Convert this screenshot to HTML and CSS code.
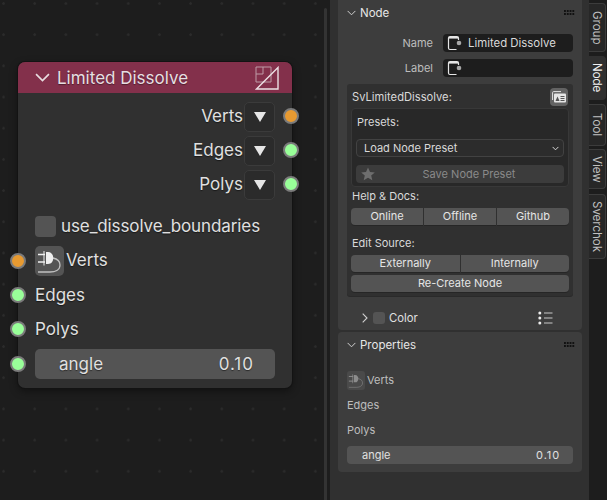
FILE: index.html
```html
<!DOCTYPE html>
<html lang="en">
  <head>
    <meta charset="UTF-8" />
    <title>Limited Dissolve</title>
    <link rel="stylesheet" href="styles.css">
  </head>
  <body>
    <svg class="defs" width="0" height="0">
      <symbol id="chev-down" viewBox="0 0 10 6"><path d="M0.7 0.7 L5 5 L9.3 0.7" fill="none" stroke="currentColor" stroke-width="1.1"/></symbol>
      <symbol id="node-ic" viewBox="0 0 15 16"><path d="M9.5 14.5 H3 Q1.5 14.5 1.5 13 V3 Q1.5 1.5 3 1.5 H10 Q11.5 1.5 11.5 3 V5" fill="none" stroke="#e6e6e6" stroke-width="1.2"/><path d="M2 2 H11 V3.6 H2 Z" fill="#e6e6e6"/><circle cx="12" cy="8" r="2.3" fill="#a8a8a8"/></symbol>
      <symbol id="plug" viewBox="0 0 29 30"><path d="M3 8.5 H10 M3 16 H10" stroke="currentColor" stroke-width="1.6"/><path d="M9 5 V19.500" stroke="currentColor" stroke-width="1"/><path d="M11 6 H13 C20 6 20 18 13 18 H11 Z" fill="currentColor"/><path d="M18 12 C23 13 25 15.500 25 19 C25 24 20 26 15 26 H3" fill="none" stroke="currentColor" stroke-opacity="0.7" stroke-width="1.3"/></symbol>
    </svg>

    <div class="app">
      <div class="canvas">
        <div class="scrollbar"></div>

        <div class="node">
          <div class="node-head">
            <svg class="node-chev"><use href="#chev-down"/></svg>
            <span class="node-title">Limited Dissolve</span>
            <svg class="node-icon" viewBox="0 0 24 24">
              <path d="M1 1 H16 V16 H1 Z M8 1 V8 H1" fill="none" stroke="#bd9aa6" stroke-width="1"/>
              <path d="M1.500 23 L23 1.500 V23 Z" fill="none" stroke="#ecdfe3" stroke-width="1.400"/>
            </svg>
          </div>

          <div class="node-row out"><span>Verts</span><div class="tri-btn"><i></i></div><b class="socket orange right"></b></div>
          <div class="node-row out"><span>Edges</span><div class="tri-btn"><i></i></div><b class="socket green right"></b></div>
          <div class="node-row out"><span>Polys</span><div class="tri-btn"><i></i></div><b class="socket green right"></b></div>

          <div class="node-row check-row"><div class="check"></div><span>use_dissolve_boundaries</span></div>
          <div class="node-row plug-row">
            <b class="socket orange left"></b>
            <div class="plug-btn"><svg><use href="#plug"/></svg></div><span>Verts</span>
          </div>
          <div class="node-row in first"><b class="socket green left"></b><span>Edges</span></div>
          <div class="node-row in"><b class="socket green left"></b><span>Polys</span></div>
          <div class="node-row field-row">
            <b class="socket green left"></b>
            <div class="node-field"><span>angle</span><span class="value">0.10</span></div>
          </div>
        </div>
      </div>

      <div class="sidebar">
        <section class="panel panel-node">
          <div class="panel-head">
            <svg class="chev"><use href="#chev-down"/></svg><span>Node</span><div class="grip"></div>
          </div>
          <div class="prop-row first">
            <label>Name</label>
            <div class="text-field"><svg><use href="#node-ic"/></svg><span>Limited Dissolve</span></div>
          </div>
          <div class="prop-row">
            <label>Label</label>
            <div class="text-field"><svg><use href="#node-ic"/></svg></div>
          </div>

          <div class="box">
            <div class="box-head">
              <span>SvLimitedDissolve:</span>
              <div class="icon-btn">
                <svg viewBox="0 0 14 12" width="14" height="12">
                  <path d="M0.600 9 V1.600 Q0.600 0.600 1.600 0.600 H9" fill="none" stroke="#e6e6e6" stroke-width="1"/>
                  <rect x="2" y="2.500" width="12" height="9" rx="1" fill="#e6e6e6"/>
                  <path d="M3.500 10 L5.500 5.500 L7.500 10 Z" fill="#555"/>
                  <path d="M8.500 5.500 H12.500 M8.500 7.500 H12.500 M8.500 9.500 H12.500" stroke="#555" stroke-width="1"/>
                </svg>
              </div>
            </div>

            <div class="inner-box">
              <div class="line">Presets:</div>
              <div class="select">
                <span>Load Node Preset</span>
                <svg viewBox="0 0 8 5" width="7" height="5"><path d="M0.700 0.700 L4 4 L7.300 0.700" fill="none" stroke="#ddd" stroke-width="1.100"/></svg>
              </div>
              <div class="save-btn">
                <svg viewBox="0 0 14 14" width="14" height="14"><path d="M7 0.500 L9 5 L13.800 5.400 L10.200 8.500 L11.300 13.300 L7 10.800 L2.700 13.300 L3.800 8.500 L0.200 5.400 L5 5 Z" fill="#6e6e6e"/></svg>
                <span>Save Node Preset</span>
              </div>
            </div>

            <div class="line label-help">Help &amp; Docs:</div>
            <div class="btn-group">
              <div class="btn">Online</div>
              <div class="btn">Offline</div>
              <div class="btn">Github</div>
            </div>

            <div class="line label-edit">Edit Source:</div>
            <div class="btn-group">
              <div class="btn">Externally</div>
              <div class="btn">Internally</div>
            </div>
            <div class="btn-group">
              <div class="btn">Re-Create Node</div>
            </div>
          </div>

          <div class="color-row">
            <svg class="chev-right" viewBox="0 0 6 10" width="6" height="10"><path d="M0.700 0.700 L5 5 L0.700 9.300" fill="none" stroke="#d0d0d0" stroke-width="1.100"/></svg>
            <div class="small-check"></div>
            <span>Color</span>
            <svg class="list-ic" viewBox="0 0 15 14" width="15" height="14">
              <circle cx="1.800" cy="2" r="1.500" fill="#eee"/><circle cx="1.800" cy="7" r="1.500" fill="#eee"/><circle cx="1.800" cy="12" r="1.500" fill="#eee"/>
              <path d="M6 2 H14.500 M6 7 H14.500 M6 12 H14.500" stroke="#9a9a9a" stroke-width="1.400"/>
            </svg>
          </div>
        </section>

        <section class="panel panel-props">
          <div class="panel-head">
            <svg class="chev"><use href="#chev-down"/></svg><span>Properties</span><div class="grip"></div>
          </div>
          <div class="sock-row verts">
            <div class="plug-small"><svg><use href="#plug"/></svg></div><span>Verts</span>
          </div>
          <div class="sock-row">Edges</div>
          <div class="sock-row">Polys</div>
          <div class="num-field"><span>angle</span><span class="value">0.10</span></div>
        </section>
      </div>

      <div class="tabs">
        <div class="tab tab-group">Group</div>
        <div class="tab tab-node active">Node</div>
        <div class="tab tab-tool">Tool</div>
        <div class="tab tab-view">View</div>
        <div class="tab tab-sverchok">Sverchok</div>
      </div>
    </div>
  </body>
</html>
```

FILE: styles.css
```css
html,
body {
  margin: 0;
  padding: 0;
  background: #1d1d1d;
}
body {
  font-family: "Inter", "Liberation Sans", sans-serif;
  overflow: hidden;
}
.defs {
  position: absolute;
}
.app {
  display: flex;
  width: 607px;
  height: 500px;
  overflow: hidden;
}

/* node editor */
.canvas {
  position: relative;
  width: 330px;
  flex: none;
  background-color: #1d1d1d;
  background-image: radial-gradient(circle at 3.5px 3.5px, #2b2b2b 1px, transparent 1.6px);
  background-size: 31.2px 31.2px;
}
.scrollbar {
  position: absolute;
  left: 324px;
  top: 8px;
  bottom: 0;
  width: 3px;
  background: #333;
  border-radius: 2px 2px 0 0;
}
.node {
  position: absolute;
  left: 18px;
  top: 62px;
  width: 274px;
  height: 326px;
  background: #303030;
  border-radius: 7px;
  box-shadow: 0 0 0 1px #131313, 0 3px 8px rgba(0, 0, 0, 0.45);
  color: #e0e0e0;
  font-size: 17px;
}
.node-head {
  display: flex;
  align-items: center;
  height: 31px;
  background: #83304b;
  border-radius: 7px 7px 0 0;
  padding-left: 17px;
  margin-bottom: 6px;
}
.node-chev {
  width: 15px;
  height: 9px;
  color: #e8dde0;
  margin-right: 7px;
}
.node-title {
  color: #e6dfe1;
  text-shadow: 0 1px 1px rgba(0, 0, 0, 0.4);
}
.node-icon {
  width: 24px;
  height: 24px;
  margin: 1px 13px 0 auto;
}
.node-row {
  position: relative;
  display: flex;
  align-items: center;
  height: 34px;
  padding: 0 17px;
  text-shadow: 0 1px 1px rgba(0, 0, 0, 0.5);
}
.node-row.out {
  justify-content: flex-end;
}
.tri-btn {
  display: flex;
  align-items: center;
  justify-content: center;
  width: 31px;
  height: 30px;
  margin-left: 1px;
  margin-top: 1px;
  box-sizing: border-box;
  border: 1px solid #3b3b3b;
  border-radius: 5px;
  background: #2b2b2b;
}
.tri-btn i {
  width: 0;
  height: 0;
  border-left: 6.5px solid transparent;
  border-right: 6.5px solid transparent;
  border-top: 10px solid #e6e6e6;
}
.socket {
  position: absolute;
  top: 50%;
  width: 12px;
  height: 12px;
  margin-top: -8px;
  border: 2px solid #7b7b7b;
  border-radius: 50%;
}
.socket.left {
  left: -8px;
}
.socket.right {
  right: -7px;
}
.socket.orange {
  background: #e79a31;
}
.socket.green {
  background: #99ff99;
}
.check-row {
  height: 22px;
  margin-top: 14px;
  letter-spacing: -0.1px;
}
.check {
  width: 21px;
  height: 21px;
  margin-right: 5px;
  background: #545454;
  border-radius: 4px;
}
.plug-row {
  height: 30px;
  margin-top: 9px;
}
.plug-row span {
  padding-bottom: 2px;
}
.plug-btn {
  width: 29px;
  height: 30px;
  margin-right: 2px;
  background: #545454;
  border-radius: 5px;
  color: #eee;
}
.plug-btn svg {
  display: block;
  width: 29px;
  height: 30px;
}
.node-row.first {
  margin-top: 2px;
}
.field-row {
  height: 30px;
  margin-top: 3px;
}
.node-field {
  display: flex;
  justify-content: space-between;
  align-items: center;
  flex: 1;
  height: 30px;
  padding: 0 21px 0 24px;
  background: #545454;
  border-radius: 5px;
}
.node-field .value {
  letter-spacing: 1px;
}

/* sidebar */
.sidebar {
  width: 259px;
  flex: none;
  box-sizing: border-box;
  height: 500px;
  padding: 0 7px 0 8px;
  background: #303030;
  font-size: 11px;
  color: #d9d9d9;
}
.panel {
  background: #3d3d3d;
  border-radius: 4px;
  padding: 0 9px;
}
.panel-node {
  padding-bottom: 3px;
  border-radius: 0 0 4px 4px;
}
.panel-props {
  margin-top: 2px;
  padding-bottom: 8px;
}
.panel-head {
  display: flex;
  align-items: center;
  height: 26px;
  color: #e6e6e6;
  font-size: 11.5px;
}
.chev {
  width: 9px;
  height: 6px;
  margin-right: 4px;
  color: #d0d0d0;
}
.grip {
  width: 11px;
  height: 6px;
  margin: 0 -2px 0 auto;
  background-image: radial-gradient(circle at 1px 1px, #111 0.9px, transparent 1px);
  background-size: 2.8px 3px;
}
.prop-row {
  display: flex;
  align-items: center;
  margin-top: 7px;
}
.prop-row.first {
  margin-top: 8px;
}
.prop-row label {
  width: 86px;
  flex: none;
  text-align: right;
  color: #bdbdbd;
}
.text-field {
  display: flex;
  align-items: center;
  flex: 1;
  height: 18px;
  margin-left: 10px;
  padding-left: 4px;
  background: #1d1d1d;
  border-radius: 4px;
  color: #d9d9d9;
  font-size: 11.4px;
}
.text-field svg {
  width: 15px;
  height: 16px;
  margin-right: 6px;
}
.box {
  margin-top: 7px;
  height: 212px;
  box-sizing: border-box;
  padding: 4px;
  background: #303030;
  border-radius: 3px;
  box-shadow: 0 1px 0 #2a2a2a;
}
.box-head {
  display: flex;
  align-items: center;
  justify-content: space-between;
  height: 18px;
  padding: 0 1px;
  font-size: 11.2px;
}
.icon-btn {
  display: flex;
  align-items: center;
  justify-content: center;
  width: 18px;
  height: 18px;
  background: #636363;
  border-radius: 4px;
}
.inner-box {
  margin-top: 2px;
  height: 79px;
  box-sizing: border-box;
  padding: 4px 4px 0;
  background: #282828;
  border: 1px solid #383838;
  border-radius: 4px;
}
.line {
  height: 18px;
  line-height: 18px;
  padding-left: 1px;
}
.select {
  display: flex;
  align-items: center;
  justify-content: space-between;
  height: 18px;
  box-sizing: border-box;
  margin-top: 8px;
  padding: 0 4px 0 7px;
  background: #2c2c2c;
  border: 1px solid #424242;
  border-radius: 4px;
}
.save-btn {
  position: relative;
  box-sizing: border-box;
  height: 18px;
  line-height: 18px;
  margin-top: 8px;
  padding-left: 18px;
  text-align: center;
  background: #3c3c3c;
  border-radius: 4px;
  color: #8a8a8a;
}
.save-btn svg {
  position: absolute;
  left: 5px;
  top: 2px;
}
.label-help {
  margin-top: 0;
}
.label-edit {
  margin-top: 9px;
}
.btn-group {
  display: flex;
  gap: 1px;
  margin-top: 3px;
  height: 17px;
}
.btn {
  flex: 1;
  line-height: 17px;
  text-align: center;
  background: #545454;
  color: #e6e6e6;
  box-shadow: 0 1px 0 #262626;
}
.btn:first-child {
  border-radius: 4px 0 0 4px;
}
.btn:last-child {
  border-radius: 0 4px 4px 0;
}
.btn:only-child {
  border-radius: 4px;
}
.color-row {
  display: flex;
  align-items: center;
  height: 18px;
  margin-top: 13px;
  padding-left: 15px;
  color: #e0e0e0;
  font-size: 11.3px;
}
.small-check {
  width: 12px;
  height: 12px;
  margin: 0 4px 0 5px;
  background: #545454;
  border-radius: 3px;
}
.list-ic {
  margin-left: auto;
  margin-right: 20px;
}
.sock-row {
  display: flex;
  align-items: center;
  height: 18px;
  margin-top: 7px;
  color: #bdbdbd;
}
.sock-row.verts {
  height: 19px;
  margin-top: 13px;
}
.sock-row.verts span {
  padding-bottom: 2px;
}
.sock-row.verts + .sock-row {
  margin-top: 6px;
}
.plug-small {
  width: 18px;
  height: 19px;
  margin-right: 2px;
  background: #4a4a4a;
  border-radius: 3px;
  color: #8c8c8c;
}
.plug-small svg {
  display: block;
  width: 18px;
  height: 19px;
}
.num-field {
  display: flex;
  justify-content: space-between;
  align-items: center;
  height: 18px;
  margin-top: 7px;
  padding: 0 13px 0 15px;
  background: #545454;
  border-radius: 4px;
  color: #e0e0e0;
}
.num-field .value {
  letter-spacing: 0.9px;
}

/* region tabs */
.tabs {
  flex: 1;
  padding-top: 3px;
  background: #1d1d1d;
  font-size: 11.5px;
  color: #c0c0c0;
}
.tab {
  box-sizing: border-box;
  width: 17px;
  display: flex;
  align-items: center;
  justify-content: center;
  writing-mode: vertical-rl;
  background: #272727;
  border: 1px solid #3c3c3c;
  border-left: none;
  border-radius: 0 4px 4px 0;
}
.tab.active {
  background: #303030;
  border-color: #303030;
  color: #f0f0f0;
}
.tab-group {
  height: 49px;
}
.tab-node {
  height: 44px;
  margin-top: 4px;
}
.tab-tool {
  height: 42px;
  margin-top: 4px;
}
.tab-view {
  height: 40px;
  margin-top: 3px;
}
.tab-sverchok {
  height: 65px;
  margin-top: 5px;
}
```
